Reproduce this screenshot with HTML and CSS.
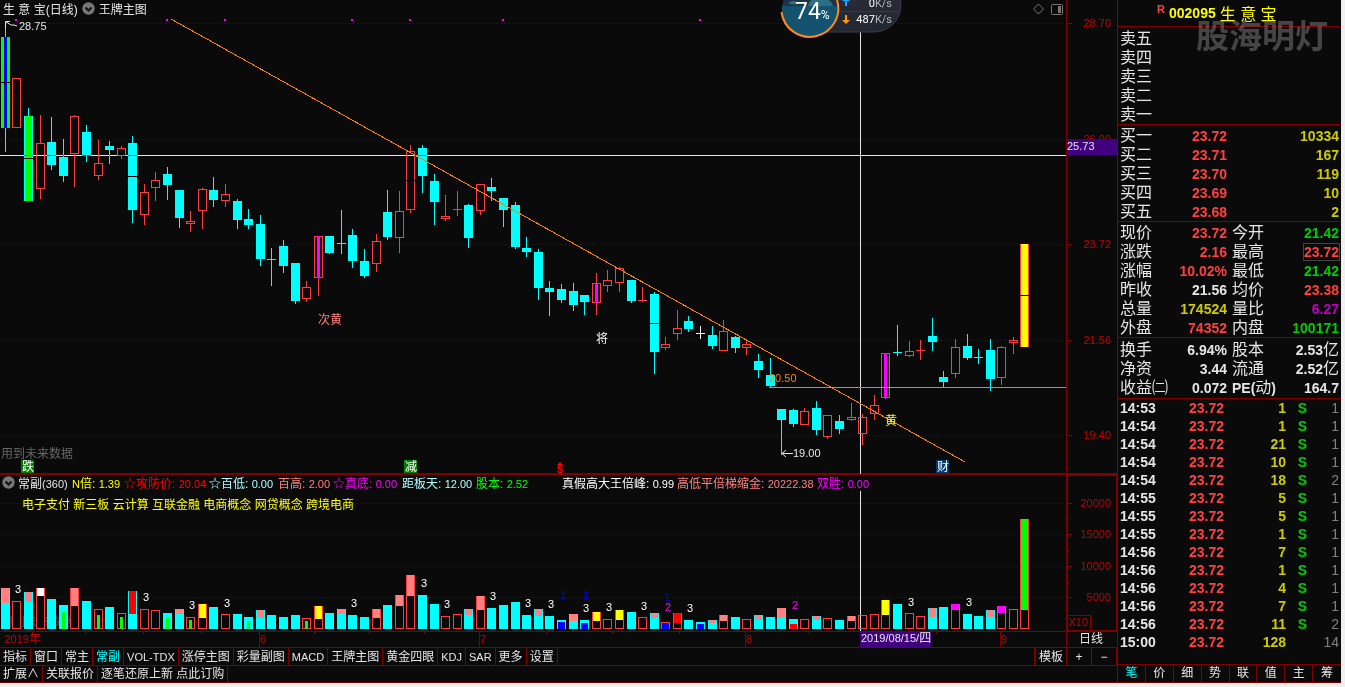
FILE: index.html
```html
<!DOCTYPE html>
<html lang="zh-CN">
<head>
<meta charset="utf-8">
<title>生意宝 002095</title>
<link rel="stylesheet" href="styles.css">
</head>
<body>
<div class="app">
  <main class="charts">
    <section class="pane">
      <svg class="plot" viewBox="0 0 1117 474" role="img" aria-label="日线图">
        <g id="price-grid"></g>
        <path class="frame" d="M1066.5 0V474M0 473.999H1117"/>
        <g class="signal-dots">
          <path d="M15 19h2v2h-2zM166 19h2v2h-2zM224 19h2v2h-2zM351 19h2v2h-2zM409 19h2v2h-2zM502 19h2v2h-2zM699 19h2v2h-2z"/>
        </g>
        <text class="cn dim" x="1" y="458">用到未来数据</text>
        <g id="candles"></g>
        <path class="trend" d="M171 19L965 462"/>
        <path class="level" d="M769 387.5H1066"/>
        <text class="num orange" x="769" y="382">20.50</text>
        <path class="arrow" d="M5.5 28V21.500H10M6 22l5 3h3l3 1"/>
        <text class="num light" x="19" y="30">28.75</text>
        <path class="arrow" d="M782 453.500H793M786 450l-4 3.500l4 3.500"/>
        <text class="num light" x="793" y="457">19.00</text>
        <text class="cn salmon" x="318" y="324">次黄</text>
        <text class="cn white" x="596" y="343">将</text>
        <text class="cn yellow" x="885" y="425">黄</text>
        <rect class="tag-green" x="21" y="460" width="13" height="13"/>
        <text class="cn white" x="22" y="471">跌</text>
        <rect class="tag-green" x="404" y="460" width="13" height="13"/>
        <text class="cn white" x="405" y="471">减</text>
        <rect class="tag-navy" x="936" y="460" width="13" height="13"/>
        <text class="cn white" x="937" y="471">财</text>
        <text class="num money" x="557" y="473">$</text>
        <path class="money-cap" d="M557 465l3-3l3 3z"/>
        <path class="cross" d="M0 155.500H1066M860.500 0V474"/>
        <g class="axis">
          <text x="1111" y="27">28.70</text>
          <text x="1111" y="143">26.00</text>
          <text x="1111" y="248">23.72</text>
          <text x="1111" y="344">21.56</text>
          <text x="1111" y="439">19.40</text>
        </g>
        <rect class="cursor-tag" x="1067" y="139" width="50" height="16"/>
        <text class="num light" x="1067" y="150">25.73</text>
      </svg>
      <header class="bar">
        <span class="cn">生 意 宝(日线)</span>
        <svg class="chev" viewBox="0 0 13 13"><circle cx="6.500" cy="6.500" r="6.200"/><path d="M3.500 5.500l3 3l3-3"/></svg>
        <span class="cn">王牌主图</span>
        <svg class="tools" viewBox="0 0 32 14"><path d="M1.500 7L6.500 2l5 5l-5 5z"/><rect x="19.500" y="2.500" width="11" height="10" rx="1"/><path class="solid" d="M26 4h3v7h-3z"/></svg>
      </header>
    </section>

    <section class="pane">
      <svg class="plot" viewBox="0 474 1117 174" role="img" aria-label="成交量图">
        <g id="volume-grid"></g>
        <text class="cn dim faint" x="1" y="626">用到未来数据</text>
        <g id="volumes"></g>
        <g id="counts"></g>
        <path class="cross" d="M860.500 491V631"/>
        <path class="frame" d="M0 474.500H1117M0 631.500H1117M0 647.500H1117M1066.500 474V647M1067.500 475V631M1116.500 475V631M1067 475.500H1117M1067 630.500H1117M1067 615.500H1090.500V631"/>
        <path class="frame" d="M85.500 631v3M143.500 631v3M201.500 631v3M314.500 631v3M369.500 631v3M424.500 631v3M546.500 631v3M612.500 631v3M679.500 631v3M809.500 631v3M936.500 631v3M259.500 631v16M479.500 631v16M745.500 631v16M1000.500 631v16"/>
        <g class="axis">
          <text x="1111" y="507">20000</text>
          <text x="1111" y="538">15000</text>
          <text x="1111" y="570">10000</text>
          <text x="1111" y="601">5000</text>
          <text x="1088" y="626">X10</text>
          <text x="266" y="643">6</text>
          <text x="486" y="643">7</text>
          <text x="752" y="643">8</text>
          <text x="1007" y="643">9</text>
          <text x="41" y="643">2019<tspan class="cn">年</tspan></text>
        </g>
        <rect class="cursor-tag" x="860" y="632" width="71" height="15"/>
        <text class="num light" x="861" y="642">2019/08/15/<tspan class="cn">四</tspan></text>
        <text class="cn light" x="1079" y="643">日线</text>
      </svg>
      <div class="over">
        <div class="legend cn">
          <svg class="chev" viewBox="0 0 13 13"><circle cx="6.500" cy="6.500" r="6.200"/><path d="M3.500 5.500l3 3l3-3"/></svg>
          <span class="light">常副<b>(360)</b></span>
          <span class="yellow"><b>N</b>倍: <b>1.39</b></span>
          <span class="red">☆攻防价: <b>20.04</b></span>
          <span class="pale">☆百低: <b>0.00</b></span>
          <span class="salmon">百高: <b>2.00</b></span>
          <span class="magenta">☆真底: <b>0.00</b></span>
          <span class="pale">距板天: <b>12.00</b></span>
          <span class="green">股本: <b>2.52</b></span>
          <span class="white">真假高大王倍峰: <b>0.99</b></span>
          <span class="salmon">高低平倍梯缩金: <b>20222.38</b></span>
          <span class="magenta">双胜: <b>0.00</b></span>
        </div>
        <p class="topics cn yellow">电子支付 新三板 云计算 互联金融 电商概念 网贷概念 跨境电商</p>
      </div>
    </section>

    <nav class="tabs cn">
      <button>指标</button><button>窗口</button><button>常主</button><button class="on">常副</button><button class="num">VOL-TDX</button><button>涨停主图</button><button>彩量副图</button><button class="num">MACD</button><button>王牌主图</button><button>黄金四眼</button><button class="num">KDJ</button><button class="num">SAR</button><button>更多</button><button>设置</button>
      <button class="template">模板</button><button class="zoom">+</button><button class="zoom">−</button>
    </nav>
    <nav class="tabs cn">
      <button>扩展∧</button><button>关联报价</button><button>逐笔还原上新 点此订购</button>
    </nav>
  </main>

  <aside class="side">
    <h1 class="stock"><sup>R</sup><b>002095</b><span>生 意 宝</span></h1>
    <div class="watermark">股海明灯</div>
    <table class="book asks">
      <tbody>
        <tr><th>卖五</th><td></td><td></td></tr>
        <tr><th>卖四</th><td></td><td></td></tr>
        <tr><th>卖三</th><td></td><td></td></tr>
        <tr><th>卖二</th><td></td><td></td></tr>
        <tr><th>卖一</th><td></td><td></td></tr>
      </tbody>
    </table>
    <table class="book">
      <tbody>
        <tr><th>买一</th><td class="up">23.72</td><td class="vol">10334</td></tr>
        <tr><th>买二</th><td class="up">23.71</td><td class="vol">167</td></tr>
        <tr><th>买三</th><td class="up">23.70</td><td class="vol">119</td></tr>
        <tr><th>买四</th><td class="up">23.69</td><td class="vol">10</td></tr>
        <tr><th>买五</th><td class="up">23.68</td><td class="vol">2</td></tr>
      </tbody>
    </table>
    <table class="quote">
      <tbody>
        <tr><th>现价</th><td class="up">23.72</td><th>今开</th><td class="down">21.42</td></tr>
        <tr><th>涨跌</th><td class="up">2.16</td><th>最高</th><td class="up"><span class="boxed">23.72</span></td></tr>
        <tr><th>涨幅</th><td class="up">10.02%</td><th>最低</th><td class="down">21.42</td></tr>
        <tr><th>昨收</th><td>21.56</td><th>均价</th><td class="up">23.38</td></tr>
        <tr><th>总量</th><td class="vol">174524</td><th>量比</th><td class="ratio">6.27</td></tr>
        <tr><th>外盘</th><td class="up">74352</td><th>内盘</th><td class="down">100171</td></tr>
      </tbody>
    </table>
    <table class="quote basics">
      <tbody>
        <tr><th>换手</th><td>6.94%</td><th>股本</th><td>2.53<i>亿</i></td></tr>
        <tr><th>净资</th><td>3.44</td><th>流通</th><td>2.52<i>亿</i></td></tr>
        <tr><th>收益㈡</th><td>0.072</td><th><b>PE(</b>动<b>)</b></th><td>164.7</td></tr>
      </tbody>
    </table>
    <table class="ticks">
      <tbody id="ticks"></tbody>
    </table>
    <nav class="side-tabs cn">
      <button class="on">笔</button><button>价</button><button>细</button><button>势</button><button>联</button><button>值</button><button>主</button><button>筹</button>
    </nav>
  </aside>
</div>

<svg class="monitor" viewBox="0 0 124 40" role="img" aria-label="74%">
  <defs>
    <linearGradient id="pill" x1="0" y1="0" x2="0" y2="1"><stop offset="0" stop-color="#2b2e38"/><stop offset="1" stop-color="#232732"/></linearGradient>
    <clipPath id="ball"><circle cx="30" cy="9" r="28"/></clipPath>
  </defs>
  <path class="pill" d="M30 -22H94A27 27 0 0 1 94 32H30z"/>
  <path class="pill-line" d="M54 11.500H118"/>
  <g clip-path="url(#ball)">
    <path fill="#1f3347" d="M0 -20H60V40H0z"/>
    <path fill="#14536f" d="M0 6H60V40H0z"/>
    <path fill="#2b6f80" d="M8 3q6-4 11 0q-5 3-11 0zM28 6q2-9 14-9q10 3 11 9z"/>
  </g>
  <path class="ring" d="M1.500 12A28.500 28.500 0 1 0 57 0"/>
  <text class="percent" x="15" y="19">74<tspan class="unit">%</tspan></text>
  <path fill="#18a8ff" d="M66 -3l4 4h-3v5h-2v-5h-3z"/>
  <path fill="#ff9a00" d="M66 24l4-4h-3v-5h-2v5h-3z"/>
  <text class="speed" x="112" y="7">0<tspan class="rate">K/s</tspan></text>
  <text class="speed" x="112" y="23">487<tspan class="rate">K/s</tspan></text>
</svg>
<script src="chart.js"></script>
</body>
</html>
```
FILE: styles.css
```css
* { box-sizing: border-box; }

body {
  margin: 0;
  padding: 0 4px 4px 0;
  background: #f0f0f0;
  color: #e6e6e6;
  font-family: "Liberation Sans", "Noto Sans CJK SC", sans-serif;
  position: relative;
  overflow-x: hidden;
}

.app {
  display: grid;
  grid-template-columns: minmax(0, 1fr) 224px;
  background: #0a0a0a;
  border-bottom: 1px solid #800000;
}

.charts { display: flex; flex-direction: column; }

/* Plot and captions share one cell so the captions lie over the drawing. */
.pane { display: grid; }
.pane > * { grid-area: 1 / 1; min-width: 0; }
.plot { display: block; width: 100%; height: auto; }

.cn { font-family: "Liberation Sans", "Noto Sans CJK SC", sans-serif; font-size: 12px; }
.num { font-size: 11px; }

.bar {
  display: flex;
  align-items: center;
  align-self: start;
  gap: 4px;
  height: 17px;
  padding-left: 3px;
  padding-right: 53px;
  white-space: nowrap;
}
.chev { width: 13px; height: 13px; flex: none; }
.chev circle { fill: #777; }
.chev path { fill: none; stroke: #111; stroke-width: 2; }
.tools { width: 32px; height: 14px; margin-left: auto; }
.tools path, .tools rect { fill: none; stroke: #777; }
.tools .solid { fill: #777; stroke: none; }

.over { align-self: start; }
.legend {
  display: grid;
  grid-template-columns: 16px 54px 52px 85px 69px 55px 69px 74px 86px 115px 140px auto;
  justify-content: start;
  align-items: center;
  height: 16px;
  padding-left: 2px;
  white-space: nowrap;
}
.legend b { font-size: 11px; font-weight: 400; }
.topics { margin: 6px 0 0 22px; line-height: 18px; white-space: nowrap; }

text { fill: currentColor; }
.frame { fill: none; stroke: #800000; shape-rendering: crispEdges; }
.grid-line { stroke: #780000; stroke-dasharray: 1 3; shape-rendering: crispEdges; }
.signal-dots { fill: #ff00ff; }
.trend { stroke: #ff8000; shape-rendering: crispEdges; }
.level { stroke: #ff8000; shape-rendering: crispEdges; }
.arrow { fill: none; stroke: #e6e6e6; }
.cross { stroke: #f0f0f0; shape-rendering: crispEdges; mix-blend-mode: difference; }
.axis { color: #c00000; font-size: 11px; text-anchor: end; }
.cursor-tag { fill: #400080; }
.tag-green { fill: #008000; }
.tag-navy { fill: #003a6e; }
.money { color: #ff0000; font-weight: 700; }
.money-cap { fill: #ff0000; }
.count { font-size: 11px; text-anchor: middle; }

.light { color: #e6e6e6; }
.white { color: #ffffff; }
.dim { color: #666666; }
.faint { color: #444444; }
.orange { color: #ff8000; }
.yellow { color: #ffff00; }
.red { color: #ff0000; }
.pale { color: #b0ffff; }
.salmon { color: #ff8080; }
.magenta { color: #ff00ff; }
.green { color: #00ff00; }
.blue { color: #0000ff; }

#candles, #volumes { shape-rendering: crispEdges; }

button {
  margin: 0;
  padding: 0 3px;
  border: 0;
  border-right: 1px solid #800000;
  background: none;
  color: #e6e6e6;
  font-family: inherit;
  font-size: 12px;
  line-height: 16px;
  white-space: nowrap;
}
button.num { font-size: 11px; }
button.on { color: #00ffff; }
.tabs { display: flex; height: 17px; }
.tabs + .tabs { border-top: 1px solid #800000; }
.template { margin-left: auto; border-left: 2px solid #800000; }
.zoom { width: 25px; }

.side {
  position: relative;
  display: flex;
  flex-direction: column;
  border-left: 1px solid #800000;
}
.stock {
  display: flex;
  align-items: center;
  height: 26px;
  margin: 0;
  padding-left: 39px;
  color: #ffff00;
  font-size: 14px;
  font-weight: 400;
}
.stock sup { width: 12px; color: #ff4040; font-size: 11px; font-weight: 700; line-height: 12px; align-self: flex-start; margin-top: 3px; }
.stock span { margin-left: 4px; font-size: 16px; }
.watermark {
  position: absolute;
  top: 13px;
  right: 13px;
  color: #808080;
  opacity: 0.5;
  font-size: 33px;
  line-height: 48px;
  font-weight: 700;
}

table {
  width: 100%;
  table-layout: fixed;
  border-collapse: separate;
  border-spacing: 0;
  border-top: 1px solid #800000;
  padding-top: 1px;
}
tr { height: 19px; }
th, td { padding: 0; line-height: 18px; white-space: nowrap; }
th { padding-left: 2px; font-size: 16px; font-weight: 400; text-align: left; }
td { font-size: 14px; font-weight: 700; text-align: right; }
td:last-child { padding-right: 2px; }
td i { font-size: 16px; font-style: normal; font-weight: 400; line-height: 16px; }
th b { font-size: 14px; }
.asks { padding-top: 2px; }
.book th { width: 50px; }
.book td:nth-child(2) { width: 59px; }
.quote th:first-child { width: 50px; }
.quote td:nth-child(2) { width: 59px; }
.quote th:nth-child(3) { width: 50px; padding-left: 5px; }
.basics { padding: 2px 0 1px; }
.boxed { outline: 1px solid #444; }

.ticks { padding-top: 0; }
.ticks tr { height: 18px; }
.ticks td { line-height: 18px; }
.ticks td:nth-child(1) { width: 50px; padding-left: 2px; text-align: left; }
.ticks td:nth-child(2) { width: 56px; }
.ticks td:nth-child(3) { width: 62px; }
.ticks td:nth-child(4) { width: 21px; }
.ticks td:nth-child(5) { color: #808080; font-weight: 400; }

.up { color: #ff4040; }
.down { color: #00cc00; }
.vol { color: #cccc00; }
.ratio { color: #c000c0; }

.side-tabs {
  display: grid;
  grid-template-columns: repeat(8, 1fr);
  margin-top: auto;
  border-top: 1px solid #800000;
}
.side-tabs button { padding: 0; line-height: 17px; }
.side-tabs button:last-child { border-right: 0; }

.monitor {
  position: absolute;
  top: 0;
  left: 780px;
  width: 124px;
  height: 40px;
}
.pill { fill: url(#pill); stroke: #3a3d47; }
.pill-line { stroke: #353944; }
.ring { fill: none; stroke: #ff8a20; stroke-width: 2; }
.percent { color: #ffffff; font-family: Roboto, sans-serif; font-size: 23px; }
.unit { font-size: 12px; }
.speed { color: #ffffff; font-family: Roboto, sans-serif; font-size: 11px; text-anchor: end; }
.rate { fill: #b0b4bc; }
```
FILE: chart.js
```js
const NS = 'http://www.w3.org/2000/svg';
const BG = '#0a0a0a';
const TONES = { c: '#00ffff', r: '#ff3c3c', w: '#ffffff' };
const BASE = 629;

// One row per day: tone, high, body top, body bottom, low, style.
const days = [
  ['c',22,37,128,152,'blue'],['r',78,78,128,128],['c',108,116,201,201,'green'],['r',115,143,189,199],
  ['c',117,142,165,170],['c',139,157,176,182],['r',115,116,154,187],['c',125,132,156,162],
  ['r',140,163,176,180],['c',141,146,150,164],['r',146,148,156,159],['c',136,143,210,223,'split'],
  ['r',184,192,215,225],['r',172,180,188,201],['c',167,174,185,200],['c',190,190,218,228],
  ['r',211,221,224,232],['r',188,189,211,229],['c',177,190,200,207],['r',184,194,201,207],
  ['c',199,201,220,229],['c',209,219,225,229],['c',215,224,259,266],['c',248,259,260,286],
  ['c',240,246,266,273],['c',263,263,301,304],['r',281,287,299,302],['r',236,236,278,296,'magenta'],
  ['c',236,236,253,254],['c',210,243,244,254],['c',229,235,261,268],['c',249,261,276,278],
  ['r',234,241,264,272],['c',190,212,237,240],['r',191,211,238,253],['r',145,151,210,213,'split'],
  ['c',145,148,176,193],['c',174,181,202,225],['r',195,216,219,221],['r',191,209,210,216],
  ['c',204,205,238,248],['r',184,184,211,215],['c',178,187,191,201],['c',198,198,210,227],
  ['c',202,205,247,249],['c',237,248,252,257],['c',249,252,288,300],['c',281,288,292,316],
  ['c',284,289,300,303],['c',283,291,305,311],['c',295,295,302,315],['r',273,283,303,315,'magenta'],
  ['r',270,280,286,292],['r',267,268,283,292],['c',280,280,301,303],['r',287,300,301,302],
  ['c',292,294,352,374,'split'],['r',337,344,348,350],['r',310,328,334,340],['c',316,321,329,332],
  ['w',326,333,334,339],['c',326,335,346,349],['r',320,331,351,351],['c',336,337,348,353],
  ['r',339,344,348,355],['c',354,361,370,378],['c',358,375,386,388],['c',409,409,420,455],
  ['c',409,410,424,427],['r',408,411,425,425],['c',401,408,430,435],['r',415,415,437,439],
  ['c',415,421,429,434],['r',403,417,420,421],['r',414,417,434,445],['r',395,405,414,420],
  ['r',353,353,398,399,'magenta'],['c',325,352,353,356],['r',341,351,356,357],['r',340,350,351,360],
  ['c',318,336,342,351],['c',371,377,382,387],['r',339,347,374,378],['c',334,346,358,360],
  ['c',349,357,358,364],['c',339,350,379,391],['r',346,347,378,385],['r',337,340,343,354],
  ['r',244,244,347,347,'yellow']
];

// One row per day: tone, top, accent colour, accent start, accent end, accent width.
const S = '#ff8080', Y = '#ffff00', G = '#00ff00', B = '#0000ff', R = '#ff0000', M = '#ff00ff';
const cap = (t, top, colour, end) => [t, top, colour, top, end, 7];
const low = (t, top, colour, start, w = 7) => [t, top, colour, start, BASE, w];
const volumes = [
  cap('c',588,S,603),['r',601],cap('c',592,S,602),cap('r',588,'#ffffff',596),['c',599],low('c',605,G,612,3),
  cap('r',588,S,606),['c',601],low('r',609,G,615,3),['c',607],low('r',613,G,617,3),cap('c',591,R,614),
  ['r',609],['r',610],low('c',613,G,618,3),cap('c',609,S,614),low('r',617,G,620,3),cap('r',604,Y,618),
  ['c',607],['r',614],['c',614],low('c',617,G,621,3),cap('c',610,S,618),['c',615],['c',617],['c',615],
  low('r',618,G,621,3),cap('r',606,Y,619),['c',613],cap('c',609,S,614),['c',615],['c',617],
  cap('r',609,S,618),['c',605],cap('r',595,S,606),cap('r',575,S,596),['c',595],['c',604],['r',616],
  ['r',614],cap('c',609,S,615),cap('r',596,S,610),['c',608],['c',605],['c',602],['c',615],
  cap('c',609,S,616),['c',616],low('c',620,B,622),cap('c',614,S,621),low('c',620,B,623),
  cap('r',612,Y,621),['r',619],cap('r',610,Y,620),['c',612],['r',617],cap('c',613,S,618),
  low('r',622,B,623),cap('r',613,R,623),['c',620],low('c',622,B,624),cap('c',620,S,623),
  cap('r',615,S,621),['c',617],['r',619],cap('c',615,S,620),['c',617],cap('c',608,S,618),
  low('c',619,R,624),['r',619],cap('c',616,S,620),['r',618],['c',620],cap('r',616,S,621),['r',615],
  ['r',614],cap('r',600,Y,615),['c',604],['r',613],['r',616],cap('c',608,S,617),['c',607],
  cap('r',604,M,610),['c',614],['c',616],cap('c',610,S,617),cap('r',606,M,613),['r',609],
  cap('r',519,G,610)
];

const counts = [
  [18,593,3],[146,601,3],[192,609,3],[227,607,3],[354,607,3],[424,587,3],[447,608,3],[493,600,3],
  [528,607,3],[551,608,3],[586,612,3],[609,611,3],[644,610,3],[563,599,1],[586,599,1],[667,601,1],
  [668,611,2],[795,609,2],[690,612,3],[911,606,3],[969,606,3]
];
const countTone = { 1: 'blue', 2: 'magenta', 3: 'white' };

function add(parent, name, attrs) {
  const el = document.createElementNS(NS, name);
  for (const key in attrs) el.setAttribute(key, attrs[key]);
  parent.appendChild(el);
  return el;
}
const box = (g, x, y, width, height, fill) => add(g, 'rect', { x, y, width, height, fill });
const centre = i => Math.floor(5.38 + i * 11.586);

function bar(g, x, top, bottom, tone) {
  box(g, x - 4, top, 9, bottom - top, TONES[tone]);
  if (tone === 'r' && bottom - top > 2) box(g, x - 3, top + 1, 7, bottom - top - 2, BG);
}

const candles = document.getElementById('candles');
days.forEach(([tone, high, top, bottom, lowest, style], i) => {
  const x = centre(i);
  box(candles, x, high, 1, lowest - high, TONES[tone]);
  bar(candles, x, top, bottom, tone);
  const h = bottom - top;
  if (style === 'blue') {
    box(candles, x - 4, top, 9, h, G);
    box(candles, x - 1, top, 3, h, B);
  }
  if (style === 'green') box(candles, x - 3, top, 7, h, G);
  if (style === 'yellow') box(candles, x - 3, top, 7, h, Y);
  if (style === 'magenta') box(candles, x - 1, top, 3, h, M);
  if (['blue', 'green', 'yellow', 'split'].includes(style)) {
    box(candles, x - 4, Math.floor((top + bottom) / 2), 9, 1, '#000000');
  }
});

const volumeGroup = document.getElementById('volumes');
volumes.forEach(([tone, top, colour, start, end, width], i) => {
  const x = centre(i);
  bar(volumeGroup, x, top, BASE, tone);
  if (colour) box(volumeGroup, x - (width - 1) / 2, start, width, end - start, colour);
});

const countGroup = document.getElementById('counts');
counts.forEach(([x, y, n]) => {
  add(countGroup, 'text', { x, y, class: 'count ' + countTone[n] }).textContent = n;
});

function grid(id, levels, minor) {
  const g = document.getElementById(id);
  levels.forEach(y => {
    add(g, 'path', { class: 'grid-line', d: `M1 ${y + 0.5}H1064` });
    add(g, 'path', { class: 'frame', d: `M1067 ${y + 0.5}h5` });
  });
  minor.forEach(y => add(g, 'path', { class: 'frame', d: `M1067 ${y + 0.5}h2` }));
}
grid('price-grid', [23, 139, 244, 340, 435], []);
grid('volume-grid', [503, 534, 566, 597], [519, 550, 582]);

const ticks = [
  ['14:53',1,'S',1],['14:54',1,'S',1],['14:54',21,'S',1],['14:54',10,'S',1],['14:54',18,'S',2],
  ['14:55',5,'S',1],['14:55',5,'S',1],['14:55',1,'S',1],['14:56',7,'S',1],['14:56',1,'S',1],
  ['14:56',4,'S',1],['14:56',7,'S',1],['14:56',11,'S',2],['15:00',128,'',14]
];
document.getElementById('ticks').innerHTML = ticks.map(([time, lots, side, n]) =>
  `<tr><td>${time}</td><td class="up">23.72</td><td class="vol">${lots}</td><td class="down">${side}</td><td>${n}</td></tr>`
).join('');
```
